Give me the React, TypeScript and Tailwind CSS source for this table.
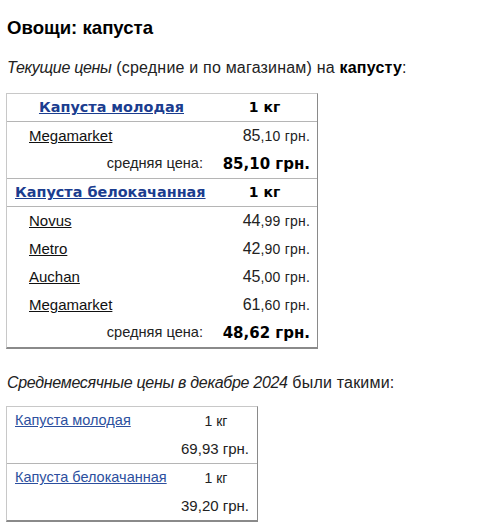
import React from "react";

const arial = { fontFamily: '"Liberation Sans", Arial, sans-serif' };

function Price({ whole, frac, big }: { whole: string; frac: string; big?: boolean }) {
  if (big) {
    return (
      <span className="font-bold text-[15px] text-black" style={{ fontFamily: '"DejaVu Sans", Verdana, sans-serif' }}>
        {whole},{frac} грн.
      </span>
    );
  }
  return (
    <span className="text-[#222]">
      <span className="text-[16px]">{whole}</span>
      <span className="text-[14px] tracking-[0.2px]">,{frac} грн.</span>
    </span>
  );
}

function StoreRow({ name, whole, frac }: { name: string; whole: string; frac: string }) {
  return (
    <div className="grid grid-cols-[209px_1fr] h-[28px] items-center">
      <a href="#" className="pl-[22px] text-[15px] text-[#111] underline">{name}</a>
      <div className="text-right pr-[7px]">
        <Price whole={whole} frac={frac} />
      </div>
    </div>
  );
}

function AvgRow({ whole, frac }: { whole: string; frac: string }) {
  return (
    <div className="grid grid-cols-[209px_1fr] h-[28px] items-center">
      <div className="text-right pr-[13px] text-[14.6px] text-[#222]">средняя цена:</div>
      <div className="text-right pr-[7px]">
        <Price whole={whole} frac={frac} big />
      </div>
    </div>
  );
}

function GroupHeader({ name, center }: { name: string; center?: boolean }) {
  return (
    <div
      className="grid grid-cols-[209px_1fr] h-[28px] items-center border-b border-[#b5b5b5]"
      style={{ fontFamily: '"DejaVu Sans", Verdana, sans-serif' }}
    >
      <a
        href="#"
        className={`font-bold text-[14.4px] text-[#1b3d8f] underline ${center ? "text-center" : "pl-[8px]"}`}
      >
        {name}
      </a>
      <div className="text-center font-bold text-[14px] text-black pr-[4px]">1 кг</div>
    </div>
  );
}

function MonthGroup({ name, whole, frac, last }: { name: string; whole: string; frac: string; last?: boolean }) {
  return (
    <div className={last ? "" : "border-b border-[#b5b5b5]"}>
      <div className="grid grid-cols-[168px_1fr] h-[28px] items-center">
        <a href="#" className="pl-[8px] text-[14.5px] text-[#2c4f9e] underline">{name}</a>
        <div className="text-center text-[14px] text-[#222]">1 кг</div>
      </div>
      <div className="h-[28px] flex items-center justify-end pr-[8px] text-[15px] text-[#222]">
        {whole},{frac} грн.
      </div>
    </div>
  );
}

export default function App() {
  return (
    <div className="w-[490px] h-[526px] bg-white overflow-hidden" style={arial}>
      <div className="px-[7px] pt-[16px]">
        <h1 className="text-[18.6px] font-bold text-black leading-[24px]">Овощи: капуста</h1>
        <p className="mt-[18px] text-[16px] text-[#222] leading-[20px] tracking-[0.2px]">
          <i className="tracking-[-0.3px]">Текущие цены</i> (средние и по магазинам) на <b className="text-black">капусту</b>:
        </p>
      </div>
      <div className="ml-[6px] mt-[15px] w-[312px] border border-[#c8c8c8] border-r-[#8a8a8a] border-b-[#8a8a8a] border-b-2">
        <GroupHeader name="Капуста молодая" center />
        <StoreRow name="Megamarket" whole="85" frac="10" />
        <div className="border-b border-[#b5b5b5]">
          <AvgRow whole="85" frac="10" />
        </div>
        <GroupHeader name="Капуста белокачанная" />
        <StoreRow name="Novus" whole="44" frac="99" />
        <StoreRow name="Metro" whole="42" frac="90" />
        <StoreRow name="Auchan" whole="45" frac="00" />
        <StoreRow name="Megamarket" whole="61" frac="60" />
        <AvgRow whole="48" frac="62" />
      </div>
      <p className="px-[7px] mt-[24px] text-[16px] text-[#222] leading-[20px] tracking-[0.2px]">
        <i className="tracking-[-0.3px]">Среднемесячные цены в декабре 2024</i> были такими:
      </p>
      <div className="ml-[6px] mt-[13px] w-[252px] border border-[#c8c8c8] border-r-[#8a8a8a] border-b-[#8a8a8a] border-b-2">
        <MonthGroup name="Капуста молодая" whole="69" frac="93" />
        <MonthGroup name="Капуста белокачанная" whole="39" frac="20" last />
      </div>
    </div>
  );
}
